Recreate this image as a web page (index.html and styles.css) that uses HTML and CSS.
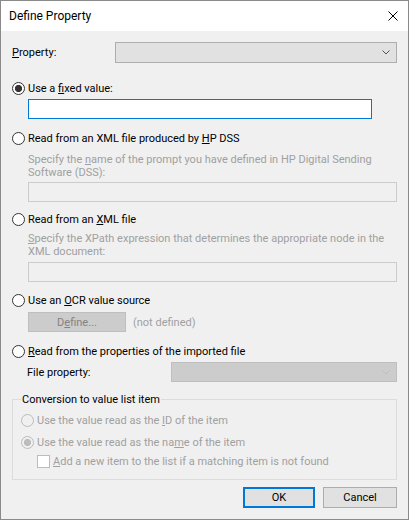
FILE: index.html
```html
<!DOCTYPE html>
<html lang="en">
  <head>
    <meta charset="utf-8" />
    <title>Define Property</title>
    <link rel="stylesheet" href="styles.css">
  </head>
  <body>
    <div class="dialog">
      <div class="titlebar">
        <span class="title">Define Property</span>
        <svg class="close" width="10" height="10" viewBox="0 0 10 10">
          <path d="M0.5 0.5L9.5 9.5M9.5 0.5L0.5 9.5" stroke="#000" stroke-width="1" />
        </svg>
      </div>

      <div class="content">
        <div class="prop-row">
          <span><u>P</u>roperty:</span>
          <div class="combo">
            <svg class="chevron" width="8" height="5" viewBox="0 0 8 5">
              <path d="M0.5 0.5L4 4L7.5 0.5" fill="none" stroke="#555" />
            </svg>
          </div>
        </div>

        <div class="option opt-fixed">
          <span class="radio checked"></span>
          <span>Use a <u>f</u>ixed value:</span>
        </div>
        <div class="textbox focused"></div>

        <div class="option opt-dss">
          <span class="radio"></span>
          <span>Read from an XML file produced by <u>H</u>P DSS</span>
        </div>
        <div class="hint">Specify the <u>n</u>ame of the prompt you have defined in HP Digital Sending<br>Software (DSS):</div>
        <div class="textbox wide disabled"></div>

        <div class="option opt-xml">
          <span class="radio"></span>
          <span>Read from an <u>X</u>ML file</span>
        </div>
        <div class="hint hint-xml"><u>S</u>pecify the XPath expression that determines the appropriate node in the<br>XML document:</div>
        <div class="textbox wide disabled box-xml"></div>

        <div class="option opt-ocr">
          <span class="radio"></span>
          <span>Use an <u>O</u>CR value source</span>
        </div>
        <div class="define-row">
          <button class="btn-define" disabled>D<u>e</u>fine...</button>
          <span class="muted">(not defined)</span>
        </div>

        <div class="option opt-file">
          <span class="radio"></span>
          <span><u>R</u>ead from the properties of the imported file</span>
        </div>
        <div class="file-row">
          <span>File property:</span>
          <div class="combo disabled">
            <svg class="chevron" width="8" height="5" viewBox="0 0 8 5">
              <path d="M0.5 0.5L4 4L7.5 0.5" fill="none" stroke="#bdbdbd" />
            </svg>
          </div>
        </div>

        <fieldset class="group">
          <legend>Conversion to value list item</legend>
          <div class="option muted opt-id">
            <span class="radio disabled"></span>
            <span>Use the value read as the <u>I</u>D of the item</span>
          </div>
          <div class="option muted opt-name">
            <span class="radio disabled checked"></span>
            <span>Use the value read as the na<u>m</u>e of the item</span>
          </div>
          <div class="option muted opt-add">
            <span class="checkbox"></span>
            <span><u>A</u>dd a new item to the list if a matching item is not found</span>
          </div>
        </fieldset>

        <div class="actions">
          <button class="btn default">OK</button>
          <button class="btn">Cancel</button>
        </div>
      </div>
    </div>
  </body>
</html>
```

FILE: styles.css
```css
/* Page */
body {
  margin: 0;
  font-family: Roboto, "Liberation Sans", sans-serif;
  font-size: 11px;
  color: #000;
}

/* Window frame */
.dialog {
  width: 409px;
  height: 520px;
  box-sizing: border-box;
  border: 1px solid #8a8a8a;
  background: #f0f0f0;
  overflow: hidden;
}

.titlebar {
  height: 30px;
  background: #fff;
  display: flex;
  align-items: center;
  justify-content: space-between;
  padding: 0 10px 0 8px;
}

.title {
  font-size: 12px;
}

.close {
  display: block;
}

.content {
  padding: 0 11px;
  white-space: nowrap;
}

/* Top property row */
.prop-row {
  margin-top: 11px;
  height: 21px;
  display: flex;
  align-items: center;
  justify-content: space-between;
}

.combo {
  width: 282px;
  height: 21px;
  box-sizing: border-box;
  border: 1px solid #adadad;
  background: #e1e1e1;
  display: flex;
  align-items: center;
  justify-content: flex-end;
  padding-right: 6px;
}

.combo.disabled {
  width: 226px;
  height: 20px;
  border-color: #bfbfbf;
  background: #cccccc;
}

/* Radio options */
.option {
  height: 15px;
  display: flex;
  align-items: center;
}

.radio {
  width: 13px;
  height: 13px;
  box-sizing: border-box;
  border: 1px solid #333;
  border-radius: 50%;
  background: #fff;
  margin-right: 3px;
  flex: none;
}

.radio.checked {
  background: radial-gradient(circle, #333 0 3.4px, #fff 3.8px);
}

.radio.disabled {
  border-color: #bcbcbc;
  background: #f0f0f0;
}

.radio.disabled.checked {
  background: radial-gradient(circle, #bcbcbc 0 3.4px, #f0f0f0 3.8px);
}

.checkbox {
  width: 13px;
  height: 13px;
  box-sizing: border-box;
  border: 1px solid #bcbcbc;
  background: #fff;
  margin: 0 3px 0 16px;
  flex: none;
}

.opt-fixed { margin-top: 18px; }
.opt-dss { margin-top: 12px; }
.opt-xml { margin-top: 10px; }
.opt-ocr { margin-top: 11px; }
.opt-file { margin-top: 12px; }

/* Text boxes */
.textbox {
  margin: 3px 0 0 16px;
  width: 344px;
  height: 20px;
  box-sizing: border-box;
  border: 1px solid #0078d7;
  background: #fff;
}

.textbox.disabled {
  width: auto;
  border-color: #cccccc;
  background: #f0f0f0;
}

.box-xml {
  margin-top: 4px;
}

.hint {
  margin: 7px 0 0 16px;
  line-height: 13px;
  color: #a0a0a0;
}

.hint-xml {
  margin-top: 5px;
}

.muted {
  color: #a0a0a0;
}

/* OCR define button */
.define-row {
  margin: 4px 0 0 16px;
  height: 20px;
  display: flex;
  align-items: center;
}

.btn-define {
  width: 98px;
  height: 20px;
  border: 1px solid #bfbfbf;
  background: #cccccc;
  color: #838383;
  font: inherit;
  padding: 0;
  margin-right: 7px;
}

/* File property row */
.file-row {
  margin: 3px 0 0 15px;
  height: 20px;
  display: flex;
  align-items: center;
  justify-content: space-between;
}

/* Group box */
.group {
  margin: 10px 0 0;
  padding: 0 8px 10px;
  border: 1px solid #dcdcdc;
  min-width: 0;
}

.group legend {
  padding: 0 1px;
  margin-left: 0;
  line-height: 15px;
}

.opt-id { margin-top: 6px; }
.opt-name { margin-top: 7px; }
.opt-add { margin-top: 4px; }

/* Dialog buttons */
.actions {
  margin-top: 7px;
  display: flex;
  justify-content: flex-end;
  gap: 8px;
}

.btn {
  width: 74px;
  height: 21px;
  box-sizing: border-box;
  border: 1px solid #adadad;
  background: #e1e1e1;
  font: inherit;
  color: #000;
  padding: 0;
}

.btn.default {
  width: 72px;
  border: 2px solid #0078d7;
}
```
